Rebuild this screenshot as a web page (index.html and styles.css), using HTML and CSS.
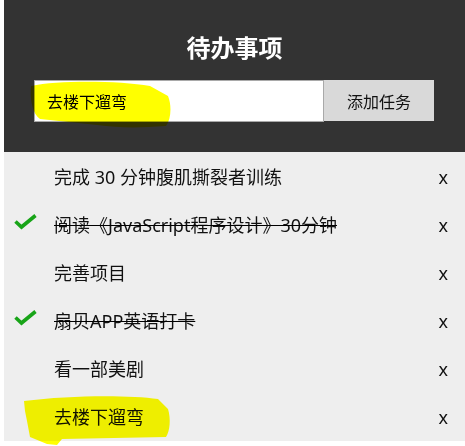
FILE: index.html
```html
<!DOCTYPE html>
<html lang="zh-CN">
<head>
<meta charset="utf-8">
<title>待办事项</title>
<link rel="stylesheet" href="styles.css">
</head>
<body>
<div class="app">
  <header class="header">
    <h1 class="title">待办事项</h1>
    <form class="add-form">
      <input class="add-input" type="text" value="去楼下遛弯">
      <button class="add-btn" type="button">添加任务</button>
    </form>
  </header>
  <ul class="list">
    <li class="item"><span class="mark"></span><span class="text">完成 30 分钟腹肌撕裂者训练</span><span class="del">x</span></li>
    <li class="item done"><span class="mark"><svg width="23" height="16" viewBox="0 0 23 16"><path d="M1.5 7.5 L7.5 13 L21.5 1.5" fill="none" stroke="#18a418" stroke-width="3.6"/></svg></span><span class="text">阅读《JavaScript程序设计》30分钟</span><span class="del">x</span></li>
    <li class="item"><span class="mark"></span><span class="text">完善项目</span><span class="del">x</span></li>
    <li class="item done"><span class="mark"><svg width="23" height="16" viewBox="0 0 23 16"><path d="M1.5 7.5 L7.5 13 L21.5 1.5" fill="none" stroke="#18a418" stroke-width="3.6"/></svg></span><span class="text">扇贝APP英语打卡</span><span class="del">x</span></li>
    <li class="item"><span class="mark"></span><span class="text">看一部美剧</span><span class="del">x</span></li>
    <li class="item"><span class="mark"></span><span class="text">去楼下遛弯</span><span class="del">x</span></li>
  </ul>
  <svg class="marker" width="465" height="446" viewBox="0 0 465 446">
    <path d="M31 86 C60 80 120 81 150 86 L168 96 C172 106 171 119 166 126 C140 128 118 128 97 125 L40 119 C31 112 30 96 31 86 Z" fill="#ffff00"/>
    <path d="M24 401 C70 395 130 395 158 399 L168 409 C171 419 170 431 166 437 L62 439 L57 445 L47 444 L30 437 L27 421 L25 411 Z" fill="#ffff00"/>
  </svg>
</div>
</body>
</html>
```

FILE: styles.css
```css
html, body {
  margin: 0;
  padding: 0;
  background: #fff;
}
body {
  font-family: "Noto Sans", "Noto Sans CJK SC", sans-serif;
}
.app {
  margin-left: 4px;
  width: 461px;
}
.header {
  background: #333333;
  height: 152px;
  box-sizing: border-box;
  padding-top: 29px;
}
.title {
  margin: 0;
  color: #fff;
  font-size: 24px;
  font-weight: bold;
  line-height: 36px;
  text-align: center;
  font-family: "Noto Sans CJK SC", sans-serif;
}
.add-form {
  display: flex;
  margin: 15px 0 0 30px;
}
.add-input {
  box-sizing: border-box;
  width: 290px;
  height: 42px;
  margin: 0;
  border: 1px solid #a9a9a9;
  background: #fff;
  padding: 0 0 0 12px;
  font-size: 16px;
  font-family: "Noto Sans CJK SC", sans-serif;
  color: #000;
  outline: none;
}
.add-btn {
  box-sizing: border-box;
  width: 110px;
  height: 41px;
  margin: 0;
  border: none;
  background: #d9d9d9;
  font-size: 16px;
  font-family: "Noto Sans CJK SC", sans-serif;
  color: #111;
  padding: 0;
}
.list {
  list-style: none;
  margin: 0;
  padding: 0;
  background: #eeeeee;
  padding-top: 1px;
}
.item {
  display: grid;
  grid-template-columns: 50px 1fr auto;
  align-items: center;
  height: 48px;
  font-size: 18px;
  color: #111;
  padding-right: 17px;
}
.mark {
  display: flex;
  padding-left: 10px;
  margin-top: -6px;
}
.text {
  line-height: 24px;
}
.done .text {
  text-decoration: line-through;
  text-decoration-color: #000;
}
.del {
  font-size: 18px;
  line-height: 24px;
}
.marker {
  position: absolute;
  left: 0;
  top: 0;
  mix-blend-mode: multiply;
  pointer-events: none;
}
```
